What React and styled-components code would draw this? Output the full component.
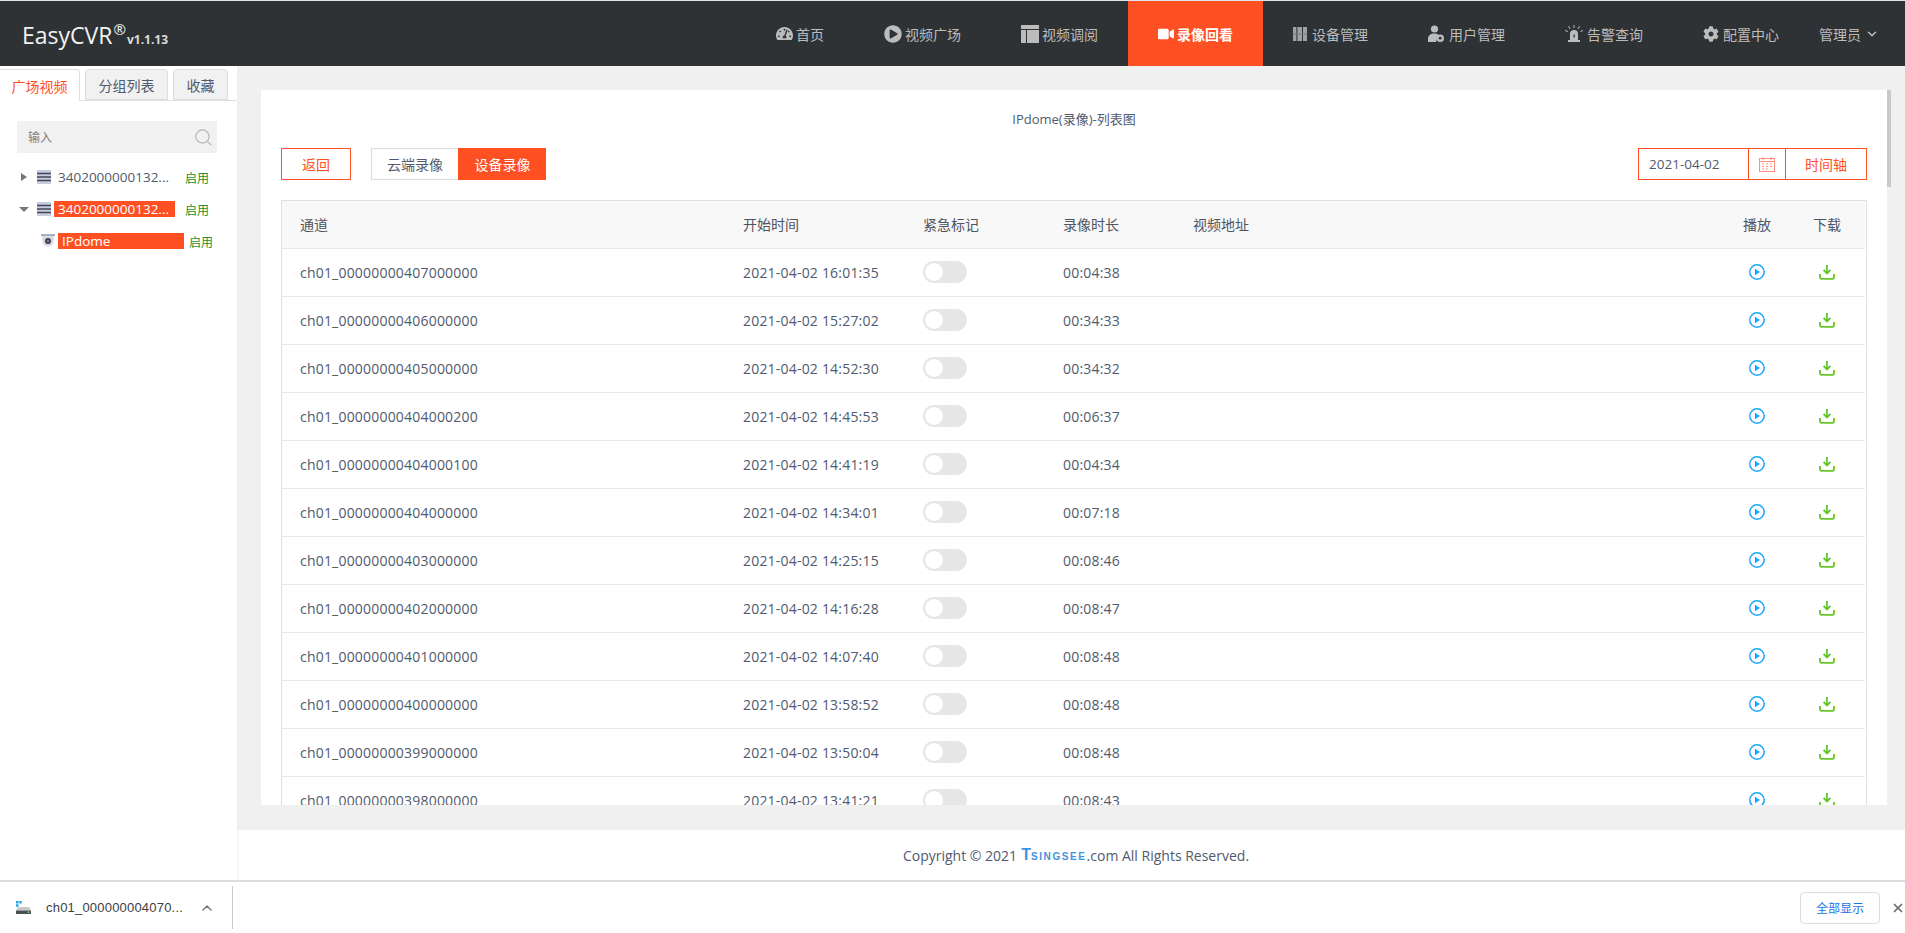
import React from 'react'
import styled, { createGlobalStyle } from 'styled-components'
import { FaTachometerAlt, FaPlayCircle, FaVideo, FaCog } from 'react-icons/fa'
import { ChevronDown, ChevronUp, X } from 'lucide-react'

const ORANGE = '#ff5023'
const TEXT = '#515a6e'

const GlobalStyle = createGlobalStyle`
    html, body {
        margin: 0;
        padding: 0;
        height: 100%;
        overflow: hidden;
        background: #fff;
    }
    body {
        font-family: "Open Sans", "Noto Sans CJK SC", sans-serif;
        font-size: 14px;
        color: ${TEXT};
    }
    * {
        box-sizing: border-box;
    }
`

const records = [
    ['ch01_00000000407000000', '2021-04-02 16:01:35', '00:04:38'],
    ['ch01_00000000406000000', '2021-04-02 15:27:02', '00:34:33'],
    ['ch01_00000000405000000', '2021-04-02 14:52:30', '00:34:32'],
    ['ch01_00000000404000200', '2021-04-02 14:45:53', '00:06:37'],
    ['ch01_00000000404000100', '2021-04-02 14:41:19', '00:04:34'],
    ['ch01_00000000404000000', '2021-04-02 14:34:01', '00:07:18'],
    ['ch01_00000000403000000', '2021-04-02 14:25:15', '00:08:46'],
    ['ch01_00000000402000000', '2021-04-02 14:16:28', '00:08:47'],
    ['ch01_00000000401000000', '2021-04-02 14:07:40', '00:08:48'],
    ['ch01_00000000400000000', '2021-04-02 13:58:52', '00:08:48'],
    ['ch01_00000000399000000', '2021-04-02 13:50:04', '00:08:48'],
    ['ch01_00000000398000000', '2021-04-02 13:41:21', '00:08:43'],
]

const TableIcon = () => (
    <svg width="18" height="18" viewBox="0 0 18 18" fill="currentColor">
        <rect x="0" y="0" width="18" height="4" />
        <rect x="0" y="5" width="5" height="13" />
        <rect x="6" y="5" width="12" height="13" />
    </svg>
)

const DeviceIcon = () => (
    <svg width="14" height="14" viewBox="0 0 14 14" fill="#a0a0a0">
        <rect x="0" y="0" width="3.4" height="14" />
        <rect x="4.4" y="0" width="4.6" height="14" />
        <rect x="10" y="0" width="4" height="14" />
        <path d="M0 6.5h14v1H0z" fill="#77797b" />
    </svg>
)

const UserGearIcon = () => (
    <svg width="16" height="17" viewBox="0 0 16 17" fill="currentColor">
        <circle cx="6.5" cy="4" r="3.6" />
        <path d="M0 17v-3.2C0 10.6 2.4 8.6 6.5 8.6c1.6 0 2.8.3 3.8.8L8 17z" />
        <circle cx="12.2" cy="13.2" r="3.8" />
        <circle cx="12.2" cy="13.2" r="1.4" fill="#2e3235" />
    </svg>
)

const SirenIcon = () => (
    <svg width="18" height="17" viewBox="0 0 18 17" fill="currentColor">
        <path d="M5 15V9a4 4 0 0 1 8 0v6z" />
        <rect x="3" y="15" width="12" height="2" />
        <path d="M9.6 8 7.8 11.4h1.3L8.4 14l2-3.4H9.1z" fill="#2e3235" />
        <path d="M8.5 0h1v3h-1zM3 1.6l.8-.6 1.7 2.4-.8.6zM14.2 1l.8.6-1.7 2.4-.8-.6zM0 6l.3-1 2.6 1-.3 1zM15.4 6l2.3-1 .3 1-2.3 1z" />
    </svg>
)

const PlayIcon = () => (
    <svg width="16" height="16" viewBox="0 0 16 16">
        <circle cx="8" cy="8" r="7.2" fill="none" stroke="#19a7ff" strokeWidth="1.5" />
        <path d="M6 4.8v6.4L11 8z" fill="#19a7ff" />
    </svg>
)

const DownloadIcon = () => (
    <svg width="16" height="15" viewBox="0 0 16 15" fill="none" stroke="#67c728" strokeWidth="1.8">
        <path d="M8 0v8M4.6 5 8 8.4 11.4 5" />
        <path d="M1 9v3.2c0 1 .6 1.6 1.6 1.6h10.8c1 0 1.6-.6 1.6-1.6V9" />
    </svg>
)

const CalendarIcon = () => (
    <svg width="16" height="15" viewBox="0 0 16 15" fill="none" stroke="#ff8f85" strokeWidth="1">
        <rect x="0.5" y="1.5" width="15" height="13" />
        <path d="M0.5 4.5h15M4 0v3M12 0v3" />
        <path d="M3 7h2M7 7h2M11 7h2M3 9.5h2M7 9.5h2M11 9.5h2M3 12h2M7 12h2" />
    </svg>
)

const SearchIcon = () => (
    <svg width="17" height="17" viewBox="0 0 17 17" fill="none" stroke="#b5b5b5" strokeWidth="1.2">
        <circle cx="7.5" cy="7.5" r="6.6" />
        <path d="m12.4 12.4 3.8 3.8" />
    </svg>
)

const ServerIcon = () => (
    <svg width="14" height="14" viewBox="0 0 14 14">
        <rect width="14" height="14" fill="#c5cbe0" />
        <path d="M0 3.5h14M0 7h14M0 10.5h14" stroke="#43464f" strokeWidth="1.3" />
    </svg>
)

const CameraIcon = () => (
    <svg width="14" height="14" viewBox="0 0 14 14">
        <rect width="14" height="2.4" fill="#aab0c8" />
        <path d="M1.4 2.4h11.2v4.4a5.6 5.6 0 0 1-11.2 0z" fill="#d5d8e6" />
        <circle cx="7" cy="7" r="3" fill="#3f424c" />
        <circle cx="7" cy="7" r="1" fill="#9a9da8" />
    </svg>
)

const DriveIcon = () => (
    <svg width="15" height="13" viewBox="0 0 15 13">
        <path d="M0 0h2.5v2.5H0zM3.2 0h2.5v2.5H3.2zM0 3.2h2.5v2.5H0z" fill="#1ea7f0" />
        <path d="M2 6h11l2 3.5H0z" fill="#c9c9c9" />
        <rect y="9.5" width="15" height="3.5" fill="#4b4f52" />
        <rect x="11.5" y="10.5" width="2" height="1.4" fill="#5fd36a" />
    </svg>
)

const Page = styled.div`
    height: 933px;
    display: flex;
    flex-direction: column;
    overflow: hidden;
    padding-top: 1px;
    background: #dfe3e8;
`
const Header = styled.header`
    height: 65px;
    flex: none;
    display: flex;
    align-items: stretch;
    justify-content: space-between;
    padding: 0 26px 0 22px;
    background: #2e3235;
`
const Logo = styled.div`
    display: flex;
    align-items: baseline;
    padding-top: 18px;
    color: #f2f2f2;
    font-size: 23px;
    line-height: 32px;
`
const Registered = styled.sup`
    font-size: 15px;
    line-height: 0;
    margin-left: 1px;
    position: relative;
    top: -9px;
    vertical-align: baseline;
`
const Version = styled.span`
    font-size: 12px;
    font-weight: 700;
    margin-left: 1px;
    color: #dcdcdc;
`
const Nav = styled.nav`
    display: flex;
    align-items: stretch;
`
const NavItem = styled.a`
    display: flex;
    align-items: center;
    gap: ${(p) => p.$gap || 3}px;
    padding: 0 30px;
    color: ${(p) => (p.$active ? '#fff' : '#bcbcbc')};
    background: ${(p) => (p.$active ? ORANGE : 'transparent')};
    font-weight: ${(p) => (p.$active ? 700 : 400)};
`
const UserMenu = styled.div`
    display: flex;
    align-items: center;
    gap: 4px;
    margin-left: 10px;
    color: #bcbcbc;
`
const Body = styled.div`
    flex: 1;
    min-height: 0;
    display: flex;
`
const Sidebar = styled.aside`
    width: 237px;
    flex: none;
    background: #fff;
`
const Tabs = styled.div`
    display: flex;
    gap: 5px;
    height: 35px;
    padding-top: 3px;
    border-bottom: 1px solid #dcdee2;
`
const Tab = styled.div`
    width: ${(p) => p.$width}px;
    height: ${(p) => (p.$active ? 32 : 31)}px;
    display: flex;
    align-items: center;
    justify-content: center;
    background: ${(p) => (p.$active ? '#fff' : '#f1f1f1')};
    color: ${(p) => (p.$active ? ORANGE : TEXT)};
    border: 1px solid #dcdee2;
    border-left-width: ${(p) => (p.$active ? 0 : 1)}px;
    border-bottom-width: ${(p) => (p.$active ? 0 : 1)}px;
    border-radius: ${(p) => (p.$active ? '0 4px 0 0' : '4px 4px 0 0')};
`
const Search = styled.div`
    height: 32px;
    margin: 20px 20px 0 17px;
    padding: 0 5px 0 11px;
    display: flex;
    align-items: center;
    justify-content: space-between;
    background: #f1f1f1;
    color: #808080;
    font-size: 12px;
`
const Tree = styled.div`
    margin-top: 8px;
`
const TreeRow = styled.div`
    height: 32px;
    display: flex;
    align-items: center;
    padding-left: ${(p) => p.$indent}px;
`
const Caret = styled.span`
    width: 16px;
    flex: none;
    display: flex;
    justify-content: center;
    &::before {
        content: '';
        border-style: solid;
        border-color: transparent;
        border-width: ${(p) => (p.$open ? '5px 5px 0 5px' : '4.5px 0 4.5px 6px')};
        border-top-color: ${(p) => (p.$open ? '#777' : 'transparent')};
        border-left-color: ${(p) => (p.$open ? 'transparent' : '#777')};
    }
`
const TreeIcon = styled.span`
    display: flex;
    margin-left: ${(p) => p.$offset || 0}px;
`
const TreeLabel = styled.span`
    width: ${(p) => p.$width}px;
    height: 16px;
    margin-left: 3px;
    padding-left: 4px;
    font-size: 13.5px;
    line-height: 16px;
    white-space: nowrap;
    background: ${(p) => (p.$selected ? ORANGE : 'transparent')};
    color: ${(p) => (p.$selected ? '#fff' : TEXT)};
`
const Enabled = styled.span`
    margin-left: ${(p) => p.$gap || 10}px;
    margin-top: 1px;
    font-size: 12px;
    color: #1d8f2e;
`
const Main = styled.main`
    flex: 1;
    min-width: 0;
    display: flex;
    flex-direction: column;
    background: #f0f0f0;
`
const Content = styled.div`
    flex: 1;
    min-height: 0;
    display: flex;
    padding: 24px 0 25px 24px;
`
const Card = styled.section`
    flex: 1;
    min-width: 0;
    padding: 0 20px;
    overflow: hidden;
    background: #fff;
`
const Rail = styled.div`
    width: 18px;
    flex: none;
`
const Thumb = styled.div`
    width: 4px;
    height: 97px;
    background: #c9c9c9;
`
const Title = styled.div`
    height: 58px;
    padding-bottom: 2px;
    display: flex;
    align-items: center;
    justify-content: center;
    font-size: 13px;
`
const Toolbar = styled.div`
    height: 32px;
    margin-bottom: 20px;
    display: flex;
    align-items: stretch;
`
const Button = styled.div`
    width: ${(p) => p.$width}px;
    display: flex;
    align-items: center;
    justify-content: center;
    color: ${ORANGE};
    border: 1px solid ${ORANGE};
`
const ToggleGroup = styled.div`
    display: flex;
    margin-left: 20px;
`
const ToggleButton = styled.div`
    width: ${(p) => (p.$on ? 88 : 87)}px;
    display: flex;
    align-items: center;
    justify-content: center;
    color: ${(p) => (p.$on ? '#fff' : TEXT)};
    background: ${(p) => (p.$on ? ORANGE : '#fff')};
    border: 1px solid ${(p) => (p.$on ? ORANGE : '#dcdcdc')};
    border-right-width: 0;
`
const DateGroup = styled.div`
    margin-left: auto;
    width: 229px;
    display: flex;
    border: 1px solid ${ORANGE};
`
const DateValue = styled.div`
    width: 109px;
    display: flex;
    align-items: center;
    padding-left: 10px;
    font-size: 13.5px;
`
const DateIcon = styled.div`
    width: 38px;
    display: flex;
    align-items: center;
    justify-content: center;
    border-left: 1px solid ${ORANGE};
    border-right: 1px solid ${ORANGE};
`
const TimelineLabel = styled.div`
    flex: 1;
    display: flex;
    align-items: center;
    justify-content: center;
    color: ${ORANGE};
`
const Table = styled.div`
    border: 1px solid #e0e0e0;
    border-bottom: 0;
    padding-right: 1px;
`
const Row = styled.div`
    height: 48px;
    padding: 0 0 1px 18px;
    display: grid;
    grid-template-columns: 443px 180px 140px 130px 550px 70px 28px;
    align-items: center;
    border-bottom: 1px solid #e8e8e8;
    background: ${(p) => (p.$head ? '#f8f8f8' : '#fff')};
`
const HeadCell = styled.div`
    white-space: nowrap;
    color: #50545e;
`
const Cell = styled.div`
    white-space: nowrap;
    letter-spacing: 0.2px;
`
const IconCell = styled.div`
    width: 28px;
    display: flex;
    justify-content: center;
`
const Switch = styled.div`
    width: 44px;
    height: 22px;
    padding: 2px;
    border-radius: 11px;
    background: #e6e6e6;
`
const Knob = styled.div`
    width: 18px;
    height: 18px;
    border-radius: 50%;
    background: #fff;
`
const Footer = styled.footer`
    height: 50px;
    flex: none;
    display: flex;
    align-items: center;
    justify-content: center;
    padding-left: 8px;
    background: #fff;
    border-left: 2px solid #f5f5f5;
    font-size: 14px;
`
const Brand = styled.span`
    margin-left: 4px;
    color: #3f93e0;
    font-family: "Liberation Sans", sans-serif;
    font-weight: 700;
    font-size: 10px;
    letter-spacing: 1.6px;
    text-transform: uppercase;
`
const BrandInitial = styled.span`
    font-size: 16px;
    letter-spacing: 0;
`
const DownloadBar = styled.div`
    height: 53px;
    flex: none;
    display: flex;
    align-items: center;
    background: #fff;
    border-top: 2px solid #dadce0;
    padding-left: 16px;
`
const FileName = styled.span`
    margin-left: 15px;
    width: 153px;
    font-family: "Liberation Sans", "Noto Sans CJK SC", sans-serif;
    font-size: 13px;
    letter-spacing: 0.2px;
    color: #3c4043;
    white-space: nowrap;
`
const Separator = styled.div`
    width: 1px;
    height: 43px;
    margin-left: 17px;
    background: #c8c8c8;
`
const ShowAll = styled.div`
    width: 80px;
    height: 32px;
    margin-left: auto;
    display: flex;
    align-items: center;
    justify-content: center;
    border: 1px solid #dadce0;
    border-radius: 4px;
    color: #1a73e8;
    font-size: 12px;
`
const CloseButton = styled.div`
    display: flex;
    margin-left: 11px;
    color: #6e6e6e;
`

const App = () => {
    return (
        <Page>
            <GlobalStyle />
            <Header>
                <Logo>
                    EasyCVR<Registered>®</Registered>
                    <Version>v1.1.13</Version>
                </Logo>
                <Nav>
                    <NavItem>
                        <FaTachometerAlt size={17} />首页
                    </NavItem>
                    <NavItem>
                        <FaPlayCircle size={18} />视频广场
                    </NavItem>
                    <NavItem>
                        <TableIcon />视频调阅
                    </NavItem>
                    <NavItem $active>
                        <FaVideo size={16} />录像回看
                    </NavItem>
                    <NavItem $gap={5}>
                        <DeviceIcon />设备管理
                    </NavItem>
                    <NavItem $gap={5}>
                        <UserGearIcon />用户管理
                    </NavItem>
                    <NavItem $gap={4}>
                        <SirenIcon />告警查询
                    </NavItem>
                    <NavItem $gap={4}>
                        <FaCog size={16} />配置中心
                    </NavItem>
                    <UserMenu>
                        管理员
                        <ChevronDown size={14} strokeWidth={2.5} />
                    </UserMenu>
                </Nav>
            </Header>
            <Body>
                <Sidebar>
                    <Tabs>
                        <Tab $active $width={80}>广场视频</Tab>
                        <Tab $width={83}>分组列表</Tab>
                        <Tab $width={55}>收藏</Tab>
                    </Tabs>
                    <Search>
                        输入
                        <SearchIcon />
                    </Search>
                    <Tree>
                        <TreeRow $indent={16}>
                            <Caret />
                            <TreeIcon $offset={5}><ServerIcon /></TreeIcon>
                            <TreeLabel $width={121}>3402000000132...</TreeLabel>
                            <Enabled>启用</Enabled>
                        </TreeRow>
                        <TreeRow $indent={16}>
                            <Caret $open />
                            <TreeIcon $offset={5}><ServerIcon /></TreeIcon>
                            <TreeLabel $selected $width={121}>3402000000132...</TreeLabel>
                            <Enabled>启用</Enabled>
                        </TreeRow>
                        <TreeRow $indent={41}>
                            <TreeIcon><CameraIcon /></TreeIcon>
                            <TreeLabel $selected $width={126}>IPdome</TreeLabel>
                            <Enabled $gap={5}>启用</Enabled>
                        </TreeRow>
                    </Tree>
                </Sidebar>
                <Main>
                    <Content>
                        <Card>
                            <Title>IPdome(录像)-列表图</Title>
                            <Toolbar>
                                <Button $width={70}>返回</Button>
                                <ToggleGroup>
                                    <ToggleButton>云端录像</ToggleButton>
                                    <ToggleButton $on>设备录像</ToggleButton>
                                </ToggleGroup>
                                <DateGroup>
                                    <DateValue>2021-04-02</DateValue>
                                    <DateIcon><CalendarIcon /></DateIcon>
                                    <TimelineLabel>时间轴</TimelineLabel>
                                </DateGroup>
                            </Toolbar>
                            <Table>
                                <Row $head>
                                    <HeadCell>通道</HeadCell>
                                    <HeadCell>开始时间</HeadCell>
                                    <HeadCell>紧急标记</HeadCell>
                                    <HeadCell>录像时长</HeadCell>
                                    <HeadCell>视频地址</HeadCell>
                                    <HeadCell>播放</HeadCell>
                                    <HeadCell>下载</HeadCell>
                                </Row>
                                {records.map((r) => (
                                    <Row key={r[0]}>
                                        <Cell>{r[0]}</Cell>
                                        <Cell>{r[1]}</Cell>
                                        <Switch><Knob /></Switch>
                                        <Cell>{r[2]}</Cell>
                                        <Cell />
                                        <IconCell><PlayIcon /></IconCell>
                                        <IconCell><DownloadIcon /></IconCell>
                                    </Row>
                                ))}
                            </Table>
                        </Card>
                        <Rail><Thumb /></Rail>
                    </Content>
                    <Footer>
                        Copyright © 2021
                        <Brand><BrandInitial>T</BrandInitial>singsee</Brand>
                        .com All Rights Reserved.
                    </Footer>
                </Main>
            </Body>
            <DownloadBar>
                <DriveIcon />
                <FileName>ch01_000000004070...</FileName>
                <ChevronUp size={16} color="#777" strokeWidth={2.2} />
                <Separator />
                <ShowAll>全部显示</ShowAll>
                <CloseButton><X size={14} strokeWidth={3} /></CloseButton>
            </DownloadBar>
        </Page>
    )
}

export default App
